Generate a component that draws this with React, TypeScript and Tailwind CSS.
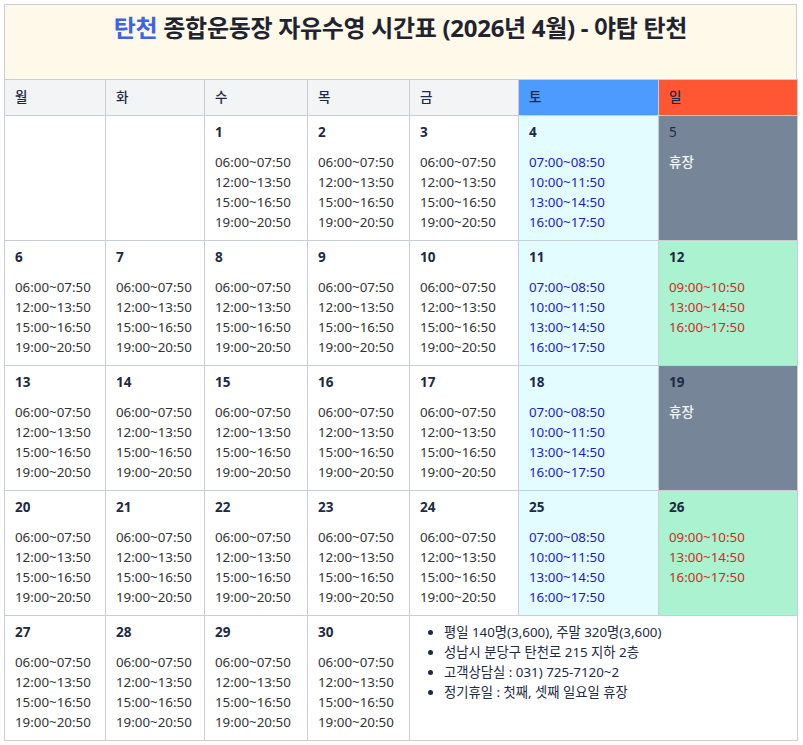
import React from "react";

type Day = { n: number; kind: "weekday" | "sat" | "sunOpen" | "closed"; thin?: boolean } | null;

const WEEKDAY_TIMES = ["06:00~07:50", "12:00~13:50", "15:00~16:50", "19:00~20:50"];
const SAT_TIMES = ["07:00~08:50", "10:00~11:50", "13:00~14:50", "16:00~17:50"];
const SUN_TIMES = ["09:00~10:50", "13:00~14:50", "16:00~17:50"];

const HEADERS = [
  { label: "월", cls: "bg-[#f3f4f6]" },
  { label: "화", cls: "bg-[#f3f4f6]" },
  { label: "수", cls: "bg-[#f3f4f6]" },
  { label: "목", cls: "bg-[#f3f4f6]" },
  { label: "금", cls: "bg-[#f3f4f6]" },
  { label: "토", cls: "bg-[#4d9bff]" },
  { label: "일", cls: "bg-[#ff5733]" },
];

const COL_WIDTHS = ["w-[101px]", "w-[99px]", "w-[103px]", "w-[102px]", "w-[109px]", "w-[140px]", "w-[139px]"];

function weekRow(start: number): Day[] {
  const row: Day[] = [];
  for (let i = 0; i < 7; i++) {
    const n = start + i;
    if (i < 5) row.push({ n, kind: "weekday" });
    else if (i === 5) row.push({ n, kind: "sat" });
    else row.push({ n, kind: n === 5 || n === 19 ? "closed" : "sunOpen", thin: n === 5 });
  }
  return row;
}

const WEEKS: Day[][] = [
  [null, null, { n: 1, kind: "weekday" }, { n: 2, kind: "weekday" }, { n: 3, kind: "weekday" }, { n: 4, kind: "sat" }, { n: 5, kind: "closed", thin: true }],
  weekRow(6),
  weekRow(13),
  weekRow(20),
];

const INFO = [
  "평일 140명(3,600), 주말 320명(3,600)",
  "성남시 분당구 탄천로 215 지하 2층",
  "고객상담실 : 031) 725-7120~2",
  "정기휴일 : 첫째, 셋째 일요일 휴장",
];

function DayCell({ day, width }: { day: Day; width: string }) {
  if (!day) return <td className={`${width} border border-[#c9ced6] bg-white`} />;

  const bg =
    day.kind === "sat" ? "bg-[#e3fcff]" : day.kind === "sunOpen" ? "bg-[#aaf2d0]" : day.kind === "closed" ? "bg-[#778599]" : "bg-white";
  const timeColor =
    day.kind === "sat" ? "text-[#1a1acc]" : day.kind === "sunOpen" ? "text-[#d42a1e]" : "text-[#333333]";
  const times = day.kind === "sat" ? SAT_TIMES : day.kind === "sunOpen" ? SUN_TIMES : WEEKDAY_TIMES;

  return (
    <td className={`${width} ${bg} border border-[#c9ced6] align-top pl-[10px] pt-[6px] pb-[8px]`}>
      <div className={`h-[20px] leading-[20px] text-[13.5px] text-[#1e2a44] ${day.thin ? "font-normal" : "font-bold"}`}>
        {day.n}
      </div>
      {day.kind === "closed" ? (
        <div className="mt-[10px] leading-[20px] text-[13.5px] font-medium text-[#f4f5f7]">휴장</div>
      ) : (
        <div className={`mt-[10px] h-[80px] text-[13.33px] leading-[20px] ${timeColor}`}>
          {times.map((t) => (
            <div key={t}>{t}</div>
          ))}
        </div>
      )}
    </td>
  );
}

export default function App() {
  return (
    <div className="bg-white p-[4px] font-['Noto_Sans','Noto_Sans_CJK_KR',sans-serif]">
      <div className="w-[793px]">
        {/* 제목 */}
        <div className="h-[76px] border border-[#c9ced6] bg-[#fef9e8] pt-[7px] text-center">
          <h1 className="text-[24px] font-bold leading-[32px] tracking-[-0.3px] text-[#1f2430]">
            <span className="text-[#3d63e6]">탄천</span> 종합운동장 자유수영 시간표 (2026년 4월) - 야탑 탄천
          </h1>
        </div>

        <table className="w-[793px] table-fixed border-collapse -mt-px">
          <thead>
            <tr className="h-[36px]">
              {HEADERS.map((h, i) => (
                <th
                  key={h.label}
                  className={`${COL_WIDTHS[i]} ${h.cls} border border-[#c9ced6] pl-[10px] text-left text-[13.5px] font-medium text-[#1e2a44]`}
                >
                  {h.label}
                </th>
              ))}
            </tr>
          </thead>
          <tbody>
            {WEEKS.map((week, wi) => (
              <tr key={wi} className="h-[125px]">
                {week.map((d, i) => (
                  <DayCell key={i} day={d} width={COL_WIDTHS[i]} />
                ))}
              </tr>
            ))}
            <tr className="h-[125px]">
              {[27, 28, 29, 30].map((n, i) => (
                <DayCell key={n} day={{ n, kind: "weekday" }} width={COL_WIDTHS[i]} />
              ))}
              <td colSpan={3} className="border border-[#c9ced6] align-top pt-[6px] pl-[34px]">
                <ul className="list-disc text-[13.33px] leading-[20px] text-[#1e2a44]">
                  {INFO.map((line) => (
                    <li key={line}>{line}</li>
                  ))}
                </ul>
              </td>
            </tr>
          </tbody>
        </table>
      </div>
    </div>
  );
}
